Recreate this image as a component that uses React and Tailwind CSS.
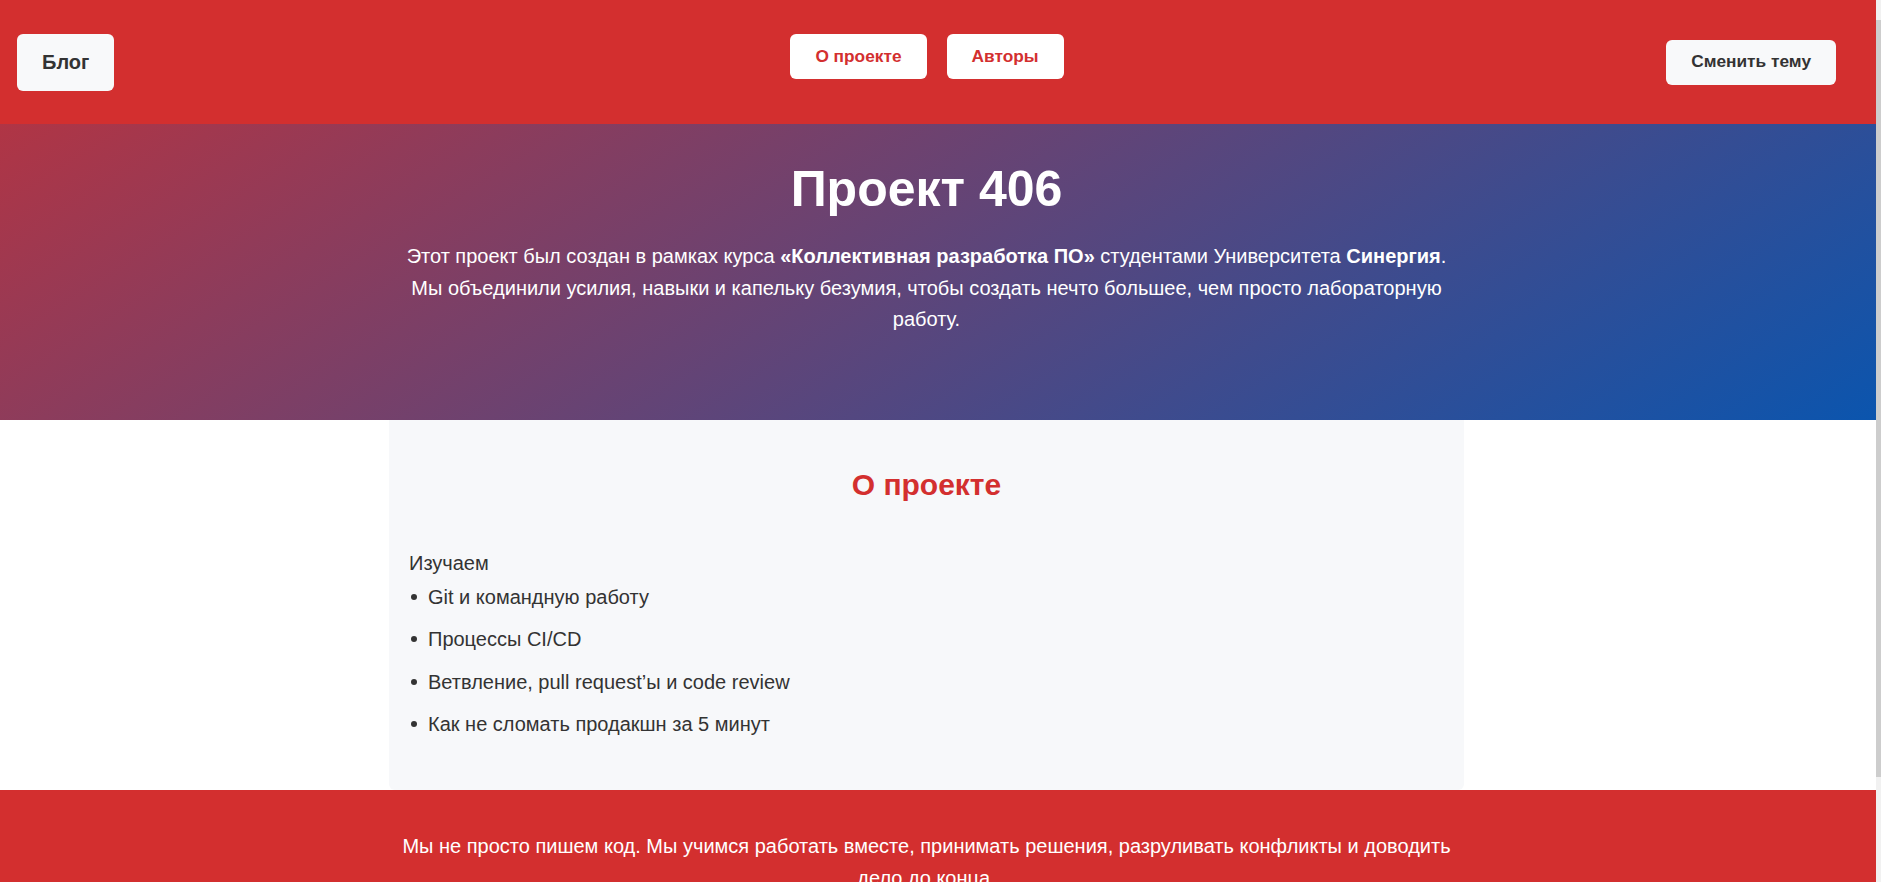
const items = [
  'Git и командную работу',
  'Процессы CI/CD',
  'Ветвление, pull request’ы и code review',
  'Как не сломать продакшн за 5 минут',
]

function Header() {
  return (
    <header className="flex h-[124px] shrink-0 items-center bg-[#d32f2f]">
      <button className="ml-[17px] flex h-[57px] items-center rounded-md bg-[#f8f9fa] px-[25px] text-[20px] font-bold text-[#333]">
        Блог
      </button>
      <nav className="ml-[676px] flex gap-[20px] self-start pt-[34px]">
        <button className="h-[45px] rounded-md bg-white px-[25px] text-[17.3px] font-bold text-[#d32f2f]">
          О проекте
        </button>
        <button className="h-[45px] rounded-md bg-white px-[25px] text-[17.3px] font-bold text-[#d32f2f]">
          Авторы
        </button>
      </nav>
      <button className="ml-auto mr-[40px] h-[45px] rounded-md bg-[#f8f9fa] px-[25px] text-[17.3px] font-bold text-[#333]">
        Сменить тему
      </button>
    </header>
  )
}

export default function App() {
  return (
    <div className="flex h-[882px] overflow-hidden bg-white font-['Liberation_Sans',Arial,sans-serif]">
      <div className="flex min-w-0 flex-1 flex-col">
        <Header />

        {/* Hero */}
        <section className="flex shrink-0 flex-col items-center bg-[linear-gradient(148deg,#b03545,#0b55ae)] pb-[84px] pr-[23px] pt-[35px] text-white">
          <h1 className="text-[50px] font-bold leading-[60px]">Проект 406</h1>
          <p className="mt-[22px] max-w-[1050px] text-center text-[20px] leading-[31.5px]">
            Этот проект был создан в рамках курса <b>«Коллективная разработка ПО»</b> студентами Университета{' '}
            <b>Синергия</b>. Мы объединили усилия, навыки и капельку безумия, чтобы создать нечто большее, чем
            просто лабораторную работу.
          </p>
        </section>

        {/* About */}
        <section className="ml-[389px] w-[1075px] shrink-0 rounded-b-md bg-[#f7f8fa] px-[20px] pb-[49.5px] pt-[47px] text-[#333]">
          <h2 className="text-center text-[30px] font-bold leading-[36px] text-[#d32f2f]">О проекте</h2>
          <p className="mt-[44px] text-[20px] leading-[32px]">Изучаем</p>
          <ul className="mt-[2px] flex flex-col gap-[10.5px]">
            {items.map((t) => (
              <li key={t} className="flex items-center text-[20px] leading-[32px]">
                <span className="ml-[2px] mr-[11px] h-[6px] w-[6px] rounded-full bg-[#333]" />
                {t}
              </li>
            ))}
          </ul>
        </section>

        <footer className="flex shrink-0 justify-center bg-[#d32f2f] pb-[40px] pr-[23px] pt-[40px] text-white">
          <p className="max-w-[1075px] text-center text-[20px] leading-[32px]">
            Мы не просто пишем код. Мы учимся работать вместе, принимать решения, разруливать конфликты и доводить
            дело до конца.
          </p>
        </footer>
      </div>

      {/* scrollbar */}
      <div className="w-[5px] shrink-0 bg-[#f1f1f1] pt-[20px]">
        <div className="h-[757px] bg-[#cdcdcd]" />
      </div>
    </div>
  )
}
